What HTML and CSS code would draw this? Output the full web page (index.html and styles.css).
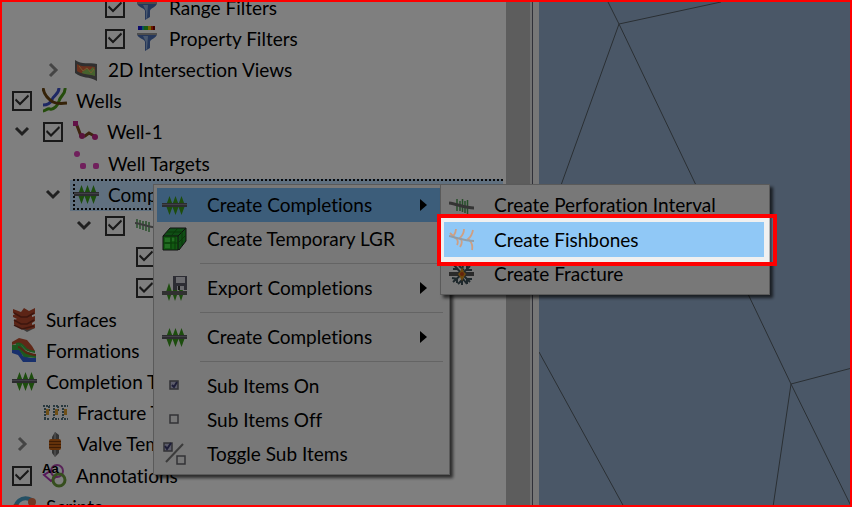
FILE: index.html
```html
<!DOCTYPE html>
<html lang="en">
<head>
<meta charset="utf-8">
<title>Project Tree</title>
<link rel="stylesheet" href="styles.css">
</head>
<body>
<svg class="defs" aria-hidden="true">
  <symbol id="i-comp" viewBox="0 0 25 25">
    <path fill="#3a9a1c" d="M7.500 3l3.500 9.500-3.500 9.500-3.500-9.500zM13.500 3l3.500 9.500-3.500 9.500-3.500-9.500zM19.500 3l3.500 9.500-3.500 9.500-3.500-9.500z"/>
    <rect y="10" width="25" height="4" fill="#58585e"/><rect y="11" width="25" height="1" fill="#80808a"/>
  </symbol>
  <symbol id="i-funnel" viewBox="0 0 25 25">
    <path fill="#4a6fb4" d="M2 8h20c0 4-7 5-7 8v6l-5 3v-9c0-3-8-4-8-8z"/>
    <path fill="#93b0dc" d="M8 10h5l-1 13-1 1v-8z"/>
    <path stroke="#9a9a9a" stroke-width="2" d="M2 8h20"/>
  </symbol>
  <symbol id="i-prop" viewBox="0 0 25 25">
    <use href="#i-funnel"/>
    <path fill="#1616d8" d="M3 0h4v4H3z"/><path fill="#10a8b0" d="M7 0h2v4H7z"/><path fill="#30b820" d="M9 0h4v4H9z"/><path fill="#e4c800" d="M13 0h3v4h-3z"/><path fill="#d83000" d="M16 0h2v4h-2z"/><path fill="#800000" d="M18 0h2v4h-2z"/>
  </symbol>
  <symbol id="i-view" viewBox="0 0 25 25">
    <path fill="#606060" d="M1 3c7 5 14 2 22 4v17C15 19 8 22 1 16z"/>
    <path fill="#d8633a" d="M3 7c6 4 12 1 18 3v9C15 16 8 18 3 14z"/>
    <path fill="#8cc45a" d="M8 15l5-3 3 1 3-3 2 3v6c-5-2-9-1-13-3z"/>
    <path fill="none" stroke="#e8b860" stroke-width="1" d="M5 9l4 5 4-3 4 5 3-4"/>
  </symbol>
  <symbol id="i-wells" viewBox="0 0 25 25">
    <path fill="none" stroke="#3c50c8" stroke-width="3" d="M17 0c0 7-6 7-7 12-2 4-6 5-9 5"/>
    <path fill="none" stroke="#4a9a18" stroke-width="3" d="M23 0c1 6-5 8-6 13-1 4-5 9-9 8-3-1-4 2-7 2"/>
    <path fill="none" stroke="#6a4410" stroke-width="3" d="M1 0c1 7 5 11 10 14 4 2 7 2 14 1"/>
  </symbol>
  <symbol id="i-well" viewBox="0 0 25 25">
    <path fill="none" stroke="#7a4a1c" stroke-width="3" d="M3 3l5 13 4 0 4-3 7 4"/>
    <path fill="#c4248c" d="M0 1h5v5H0z"/><circle cx="9" cy="16" r="3" fill="#b02878"/><circle cx="22" cy="17" r="3" fill="#c4248c"/>
  </symbol>
  <symbol id="i-targets" viewBox="0 0 25 25">
    <circle cx="3" cy="3" r="3" fill="#e040b8"/><rect x="6" y="12" width="6" height="6" rx="2" fill="#e040b8"/><rect x="19" y="12" width="6" height="6" rx="2" fill="#e040b8"/>
  </symbol>
  <symbol id="i-perf" viewBox="0 0 25 25">
    <path stroke="#4a9c50" stroke-width="1.500" d="M8 6v12M11 8v10M13.500 6v13M16 8v12M18.500 7v14"/>
    <path fill="none" stroke="#686868" stroke-width="3" d="M0 10c8 1 16 5 25 5"/>
  </symbol>
  <symbol id="i-perf2" viewBox="0 0 25 25">
    <path stroke="#4fa055" stroke-width="1.500" d="M2 6v9M5 7v9M8 8v9M11 8v10M14 9v10"/>
    <path fill="none" stroke="#777" stroke-width="2" d="M0 10c8 1 16 5 25 5"/>
  </symbol>
  <symbol id="i-fish" viewBox="0 0 25 25">
    <path fill="none" stroke="#cf9f82" stroke-width="1.800" d="M7 2c0 3-1 5-3 8 4 1 6 4 4 8M15 2c0 4-1 6-4 9 3 3 2 6 0 9M24 3c-1 5-2 7-5 9 4 3 5 6 4 11M4 9L1 6"/>
    <path fill="none" stroke="#929ea8" stroke-width="2" d="M0 9c9 2 16 5 25 5"/>
  </symbol>
  <symbol id="i-frac" viewBox="0 0 25 25">
    <path fill="none" stroke="#3c5058" stroke-width="2" d="M13 12L5 3M4 7l5 0M13 12l1-10M10 4l5 4M13 12l8-8M18 4v4h5M13 12L4 20M8 16v5M3 16l6 1M13 12v11M9 22l5-5 4 5M13 12l8 8M17 17h6M18 22v-5"/>
    <path fill="#555" d="M0 10h25v4H0z"/>
    <path fill="#d8901c" d="M13 5l2 5 2 2-2 3-2 4-2-4-2-3 2-2z"/><circle cx="13" cy="12" r="2" fill="#c84818"/>
  </symbol>
  <symbol id="i-lgr" viewBox="0 0 25 25">
    <path fill="#1f9a2a" stroke="#222" d="M1 9l7-8h16v13l-7 9z"/>
    <path fill="#22b422" d="M1 9h15v14H1z"/>
    <path fill="#46dc46" d="M3 11h5v4H3zM10 11h3v3h-3zM3 17h5v4H3z"/>
    <path fill="none" stroke="#222" d="M1 9h15v14H1zM16 9l8-8"/>
    <path fill="none" stroke="#127012" d="M2 16h14l8-8M9 23V9l7-8M13 23V9M20 5v13M5 5h15"/>
  </symbol>
  <symbol id="i-export" viewBox="0 0 25 25">
    <path fill="#3a9a1c" d="M7 7l3 9-3 9-3-9zM13 11l3 5-3 9-3-9zM19 12l3 4-3 9-3-9z"/>
    <rect y="15" width="25" height="4" fill="#626262"/>
    <path fill="#5a5a68" d="M11 0h14v14H11z"/><path fill="#d4d4dc" d="M14 1h9v6h-9zM15 10h7v4h-7z"/><path fill="#333" d="M16 10h2v4h-2z"/>
  </symbol>
  <symbol id="i-on" viewBox="0 0 25 25">
    <rect x="8" y="7" width="8" height="8" fill="#b8b8d4" stroke="#606068" stroke-width="1.500"/>
    <path fill="none" stroke="#3c3c70" stroke-width="2" d="M10 11l2 2 3-5"/>
  </symbol>
  <symbol id="i-off" viewBox="0 0 25 25"><rect x="8" y="7" width="8" height="8" fill="#eee" stroke="#65656c" stroke-width="1.500"/></symbol>
  <symbol id="i-toggle" viewBox="0 0 25 25">
    <rect x="2" y="1" width="8" height="8" fill="#b8b8d4" stroke="#606068" stroke-width="1.500"/>
    <path fill="none" stroke="#3c3c70" stroke-width="2" d="M3 4l2 3 4-6"/>
    <path stroke="#777" stroke-width="2" d="M21 2L4 20"/>
    <rect x="15" y="14" width="8" height="8" fill="#eee" stroke="#65656c" stroke-width="1.500"/>
  </symbol>
  <symbol id="i-surf" viewBox="0 0 25 25">
    <path fill="#777" d="M2 17l13 8 8-4v-3z"/>
    <path fill="#b8492c" d="M1 2l8 3 3-4 5 3 6-3v6l-3 1v2l3-1v5l-3 2v2l3-1v4l-8 2-8-3-5-3v-4l3-1-4-2V8l3-1-3-1z"/>
    <path fill="none" stroke="#7a2c1c" stroke-width="1.500" d="M2 6l7 4 6 0 7-4M2 13l7 4 6 0 7-4M2 18l8 4 12-3"/>
  </symbol>
  <symbol id="i-form" viewBox="0 0 25 25">
    <path fill="#3060d8" d="M0 10l7 0 4 8 8 2 5 0 0 4-13 0-5-7-6-2z"/>
    <path fill="#38b040" d="M0 7l8-1 6 7 10 4v3l-12-1-5-7-7 0z"/>
    <path fill="#c05030" d="M0 4l7-4 8 2 5 6 3 5-8 0-4-6-5-2-6 2z"/>
    <path fill="none" stroke="#38b040" stroke-width="2" d="M4 6c5-2 7 2 10 5 3 2 6 3 9 3"/>
    <path fill="none" stroke="#b04828" stroke-width="2" d="M6 9c3 0 5 4 9 6 3 1 6 2 9 2"/>
  </symbol>
  <symbol id="i-ftpl" viewBox="0 0 25 25">
    <path fill="none" stroke="#50717c" stroke-width="2" stroke-dasharray="2 1" d="M0 6h7M2 8v10M1 19h6M10 6h6M11 8v10M9 19h7M18 6h7M20 8v10M18 19h7M6 6v5M15 6v5"/>
    <path fill="#e0a030" d="M3 9h3v6H3zM12 9h3v6h-3zM21 9h3v6h-3z"/>
  </symbol>
  <symbol id="i-valve" viewBox="0 0 25 25">
    <path fill="#666" d="M9 5l3-5 4 3v18l-4 4-3-4z"/><path stroke="#bbb" stroke-width="1" d="M12 1v23"/>
    <rect x="6" y="7" width="12" height="11" rx="2" fill="#c86414"/>
    <path stroke="#7c3808" d="M6 9.500h12M6 12.500h12M6 15.500h12"/>
  </symbol>
  <symbol id="i-anno" viewBox="0 0 25 25">
    <circle cx="15" cy="8" r="6" fill="none" stroke="#b048b0" stroke-width="2"/>
    <path fill="none" stroke="#b030b8" stroke-width="2" d="M10 7l-8 5 7 6 6-5"/>
    <circle cx="17" cy="17" r="6" fill="none" stroke="#6c9c3c" stroke-width="3"/>
    <text x="0" y="10" class="aa">Aa</text>
  </symbol>
  <symbol id="i-script" viewBox="0 0 25 25">
    <path fill="none" stroke="#48a0c8" stroke-width="4" d="M4 20C1 8 10 1 20 6"/>
    <circle cx="4" cy="14" r="4" fill="#e07048"/><circle cx="20" cy="8" r="4" fill="#e07048"/>
  </symbol>
  <symbol id="i-down" viewBox="0 0 20 20"><path fill="none" stroke="#404040" stroke-width="3" d="M4 6l6 6 6-6"/></symbol>
  <symbol id="i-right" viewBox="0 0 20 20"><path fill="none" stroke="#8a8a8a" stroke-width="3" d="M7 4l6 6-6 6"/></symbol>
</svg>

<main class="window">
  <section class="pane">
    <ul class="tree">
      <li class="row d3"><input type="checkbox" id="c1" checked><svg><use href="#i-funnel"/></svg><label for="c1">Range Filters</label></li>
      <li class="row d3"><input type="checkbox" id="c2" checked><svg><use href="#i-prop"/></svg><label for="c2">Property Filters</label></li>
      <li class="row d2"><button class="twist" aria-label="Expand"><svg><use href="#i-right"/></svg></button><svg><use href="#i-view"/></svg><span>2D Intersection Views</span></li>
      <li class="row d0"><input type="checkbox" id="c3" checked><svg><use href="#i-wells"/></svg><label for="c3">Wells</label></li>
      <li class="row d1"><button class="twist" aria-label="Collapse"><svg><use href="#i-down"/></svg></button><input type="checkbox" id="c4" checked><svg><use href="#i-well"/></svg><label for="c4">Well-1</label></li>
      <li class="row d2"><svg><use href="#i-targets"/></svg><span>Well Targets</span></li>
      <li class="row d2"><button class="twist" aria-label="Collapse"><svg><use href="#i-down"/></svg></button><div class="selected"><svg><use href="#i-comp"/></svg><span>Completions</span></div></li>
      <li class="row d3"><button class="twist" aria-label="Collapse"><svg><use href="#i-down"/></svg></button><input type="checkbox" aria-label="Perforations" checked><svg><use href="#i-perf2"/></svg></li>
      <li class="row d4"><input type="checkbox" aria-label="Interval 1" checked></li>
      <li class="row d4"><input type="checkbox" aria-label="Interval 2" checked></li>
      <li class="row d0"><svg><use href="#i-surf"/></svg><span>Surfaces</span></li>
      <li class="row d0"><svg><use href="#i-form"/></svg><span>Formations</span></li>
      <li class="row d0"><svg><use href="#i-comp"/></svg><span>Completion Templates</span></li>
      <li class="row d1"><svg><use href="#i-ftpl"/></svg><span>Fracture Templates</span></li>
      <li class="row d1"><button class="twist" aria-label="Expand"><svg><use href="#i-right"/></svg></button><svg><use href="#i-valve"/></svg><span>Valve Templates</span></li>
      <li class="row d0"><input type="checkbox" id="c5" checked><svg><use href="#i-anno"/></svg><label for="c5">Annotations</label></li>
      <li class="row d0"><svg><use href="#i-script"/></svg><span>Scripts</span></li>
    </ul>
    <div class="track"></div>
    <div class="splitter"></div>
  </section>
  <section class="view">
    <svg viewBox="539 0 313 507" preserveAspectRatio="xMinYMin slice">
      <path fill="none" stroke="#545e66" stroke-width="1" d="M607 0L619 24 721 2M560 188L619 24 791 384 852 368M791 384L773 507M791 384L852 508M539 352L624 507"/>
    </svg>
  </section>

  <div class="menu main-menu" role="menu">
    <button class="item active" role="menuitem"><svg><use href="#i-comp"/></svg><span>Create Completions</span><i class="arrow"></i></button>
    <button class="item" role="menuitem"><svg><use href="#i-lgr"/></svg><span>Create Temporary LGR</span></button>
    <hr>
    <button class="item" role="menuitem"><svg><use href="#i-export"/></svg><span>Export Completions</span><i class="arrow"></i></button>
    <hr>
    <button class="item" role="menuitem"><svg><use href="#i-comp"/></svg><span>Create Completions</span><i class="arrow"></i></button>
    <hr>
    <button class="item" role="menuitem"><svg><use href="#i-on"/></svg><span>Sub Items On</span></button>
    <button class="item" role="menuitem"><svg><use href="#i-off"/></svg><span>Sub Items Off</span></button>
    <button class="item" role="menuitem"><svg><use href="#i-toggle"/></svg><span>Toggle Sub Items</span></button>
  </div>

  <div class="menu sub-menu" role="menu">
    <button class="item" role="menuitem"><svg><use href="#i-perf"/></svg><span>Create Perforation Interval</span></button>
    <button class="item active spot" role="menuitem"><svg><use href="#i-fish"/></svg><span>Create Fishbones</span></button>
    <button class="item" role="menuitem"><svg><use href="#i-frac"/></svg><span>Create Fracture</span></button>
  </div>
</main>
</body>
</html>
```
FILE: styles.css
```css
* { box-sizing: border-box; }

body {
  margin: 0;
  font: 19px/24px Lato, "Noto Sans", sans-serif;
  font-variant-ligatures: none;
  color: #000;
}

.defs { position: absolute; width: 0; height: 0; }
.aa { font: bold 13px "Liberation Sans", sans-serif; }

.window {
  position: relative;
  display: flex;
  height: 100vh;
  overflow: hidden;
}

/* red frame above the dimming layer */
.window::after {
  content: "";
  position: absolute;
  inset: 0;
  z-index: 5;
  border: 2px solid #f00;
  pointer-events: none;
}

.pane { display: flex; flex: 0 0 539px; min-width: 0; }

.tree {
  flex: 1;
  min-width: 0;
  margin: -8px 0 0;
  padding: 0;
  list-style: none;
  background: #fff;
}

.row {
  display: flex;
  align-items: center;
  height: 31px;
  white-space: nowrap;
}
.row:nth-child(5n) { height: 32px; }
.row svg { flex: none; width: 25px; height: 25px; margin-right: 9px; }

.d0 { padding-left: 12px; }
.d1 { padding-left: 43px; }
.d2 { padding-left: 74px; }
.d3 { padding-left: 105px; }
.d4 { padding-left: 136px; }

.twist {
  flex: none;
  width: 20px;
  height: 20px;
  margin: 0 11px 0 -31px;
  padding: 0;
  border: 0;
  background: none;
}
.row .twist svg { display: block; width: 20px; height: 20px; margin: 0; }

input[type="checkbox"] {
  appearance: none;
  flex: none;
  width: 20px;
  height: 20px;
  margin: 0 10px 0 0;
  border: 2px solid #333;
  background: #fff;
}
input[type="checkbox"]:checked::after {
  content: "";
  display: block;
  width: 16px;
  height: 16px;
  background: #333;
  clip-path: polygon(1px 8px, 2px 6px, 6px 10px, 14px 2px, 15px 4px, 6px 13px);
}

.selected {
  display: flex;
  flex: 1;
  align-items: center;
  height: 31px;
  margin: 0 3px 0 -1px;
  border: 2px dotted #111;
  background: #c0e0ff;
  box-shadow: -3px 1px 0 #c0e0ff;
}
.selected svg { margin-left: -1px; }

.track { flex: 0 0 24px; background: #bababa; }
.splitter {
  flex: 0 0 9px;
  border-left: 2px solid #e4e4e4;
  background: linear-gradient(90deg, #606070 1px, #eee 1px);
}

.view { flex: 1; min-width: 0; background: #95afcf; }
.view svg { display: block; width: 100%; height: 100%; }

.menu {
  position: absolute;
  top: 184px;
  padding: 3px;
  border: 1px solid #b4b4b4;
  background: #f0f0f0;
  box-shadow: 3px 3px 3px rgba(0, 0, 0, .65);
}
.main-menu { left: 153px; width: 297px; }
.sub-menu { left: 440px; width: 330px; padding-right: 5px; }

.item {
  display: flex;
  align-items: center;
  width: 100%;
  height: 34px;
  padding: 0 19px 0 5px;
  border: 0;
  background: none;
  font: inherit;
  font-variant-ligatures: none;
  color: inherit;
  text-align: left;
  white-space: nowrap;
}
.item svg { flex: none; width: 25px; height: 25px; margin-right: 20px; }
.item span { flex: 1; }
.active { background: #78baf4; }

.arrow {
  border: 6px solid transparent;
  border-right: 0;
  border-left: 7px solid #000;
}

.menu hr {
  height: 1px;
  margin: 7px 3px 7px 43px;
  border: 0;
  background: #c8c8c8;
}

/* highlighted entry: red box, everything around it dimmed */
.spot { position: relative; height: 35px; background: #90c8f6; }
.spot::after {
  content: "";
  position: absolute;
  inset: -8px -13px -9px -7px;
  z-index: 4;
  border: 4px solid #f00;
  box-shadow: 0 0 0 2000px rgba(0, 0, 0, .5);
  pointer-events: none;
}
```
